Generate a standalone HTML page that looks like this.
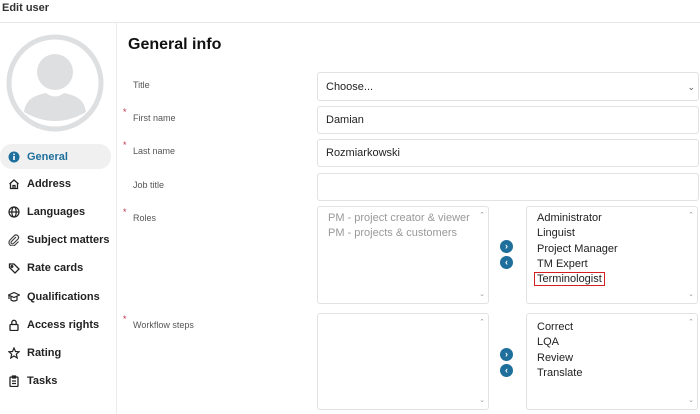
<!DOCTYPE html>
<html><head><style>
*{box-sizing:border-box;margin:0;padding:0}
body{width:700px;height:414px;overflow:hidden;background:#fff;font-family:"Liberation Sans",sans-serif;color:#222;position:relative}
.a{position:absolute}
.top{left:0;top:0;width:700px;height:23px;border-bottom:1px solid #e8e8e8;font-size:11px;font-weight:bold;padding:2px 0 0 2px;color:#333}
.side{left:116px;top:23px;width:1px;height:391px;background:#ececec}
.nav{left:8px;font-size:11px;font-weight:bold;color:#222}
.nav svg{position:absolute;left:0;top:0}
.nav span{position:absolute;left:19px;top:0;white-space:nowrap}
.lbl{left:133px;font-size:9px;color:#555}
.req{left:123px;font-size:9px;color:#c0304a}
.in{left:317px;width:382px;border:1px solid #e2e2e2;border-radius:3px;font-size:11px;padding-left:8px;color:#222}
.box{border:1px solid #e2e2e2;border-radius:3px;font-size:11px;line-height:15.3px;padding:4px 10px}
.sb{position:absolute;right:3px;font-size:7px;color:#999}
.btn{width:13px;height:13px;border-radius:50%;background:#1e6f9c;color:#fff;font-size:9px;font-weight:bold;text-align:center;line-height:12px}
</style></head><body>
<div class="a top">Edit user</div>
<div class="a side"></div>
<svg class="a" style="left:6px;top:34px" width="98" height="98" viewBox="0 0 98 98">
<circle cx="49" cy="49" r="46" fill="#fff" stroke="#dedfe1" stroke-width="5"/>
<circle cx="49" cy="38" r="18" fill="#dedfe1"/>
<path d="M18 78 C20 66 26 62 40 59 Q49 66 58 59 C72 62 78 66 80 78 Q49 96 18 78Z" fill="#dedfe1"/>
</svg>
<div class="a" style="left:0;top:144px;width:111px;height:25px;background:#f0f0f0;border-radius:12px"></div>
<div class="a nav" style="top:151px;color:#1e6f9c"><svg width="12" height="12"><circle cx="6" cy="6" r="5.5" fill="#1e6f9c"/><rect x="5.2" y="5" width="1.6" height="4" fill="#fff"/><rect x="5.2" y="2.6" width="1.6" height="1.5" fill="#fff"/></svg><span>General</span></div>
<div class="a nav" style="top:178px"><svg width="12" height="12" fill="none" stroke="#222" stroke-width="1.3"><path d="M1.5 6 L6 2 L10.5 6 M2.5 5.5 V10.5 H9.5 V5.5 M5 10.5 V7.5 H7 V10.5"/></svg><span>Address</span></div>
<div class="a nav" style="top:206px"><svg width="12" height="12" fill="none" stroke="#222" stroke-width="1.2"><circle cx="6" cy="6" r="5"/><ellipse cx="6" cy="6" rx="2.2" ry="5"/><path d="M1 6H11"/></svg><span>Languages</span></div>
<div class="a nav" style="top:234px"><svg width="12" height="12" fill="none" stroke="#444" stroke-width="1.2"><path d="M8 3 L3.5 7.5 A1.3 1.3 0 0 0 5.5 9.5 L10 5 A2.5 2.5 0 0 0 6.5 1.5 L2 6 A3.5 3.5 0 0 0 7 11 L10.5 7.5"/></svg><span>Subject matters</span></div>
<div class="a nav" style="top:262px"><svg width="12" height="12" fill="none" stroke="#222" stroke-width="1.3"><path d="M1.5 2 H6 L11 7 L7 11 L1.5 5.5Z"/><circle cx="4" cy="4.5" r=".8"/></svg><span>Rate cards</span></div>
<div class="a nav" style="top:291px"><svg width="12" height="12" fill="none" stroke="#222" stroke-width="1.2"><path d="M0.5 4 L6 1.5 L11.5 4 L6 6.5Z M3 5.5 V9 Q6 11 9 9 V5.5 M1 4 V8"/></svg><span>Qualifications</span></div>
<div class="a nav" style="top:319px"><svg width="12" height="12" fill="none" stroke="#222" stroke-width="1.3"><rect x="2" y="5.5" width="8" height="6" rx="1"/><path d="M3.8 5.5 V3.5 A2.2 2.2 0 0 1 8.2 3.5 V5.5"/></svg><span>Access rights</span></div>
<div class="a nav" style="top:347px"><svg width="12" height="12" fill="none" stroke="#222" stroke-width="1.2"><path d="M6 1 L7.5 4.5 L11 4.8 L8.3 7.2 L9.2 11 L6 9 L2.8 11 L3.7 7.2 L1 4.8 L4.5 4.5Z"/></svg><span>Rating</span></div>
<div class="a nav" style="top:375px"><svg width="12" height="12" fill="none" stroke="#222" stroke-width="1.3"><rect x="2" y="2" width="8" height="9.5" rx="1"/><path d="M4.5 1 H7.5 V3 H4.5Z M4 6 H8 M4 8.5 H8"/></svg><span>Tasks</span></div>

<div class="a" style="left:128px;top:36px;font-size:16px;font-weight:bold;color:#111">General info</div>
<div class="a lbl" style="top:80px">Title</div>
<div class="a req" style="top:107px">*</div><div class="a lbl" style="top:113px">First name</div>
<div class="a req" style="top:140px">*</div><div class="a lbl" style="top:146px">Last name</div>
<div class="a lbl" style="top:180px">Job title</div>
<div class="a req" style="top:207px">*</div><div class="a lbl" style="top:213px">Roles</div>
<div class="a req" style="top:314px">*</div><div class="a lbl" style="top:320px">Workflow steps</div>

<div class="a in" style="top:72px;height:29px;line-height:28px">Choose...<span style="position:absolute;right:3px;font-size:9px;color:#555">&#8964;</span></div>
<div class="a in" style="top:106px;height:28px;line-height:27px">Damian</div>
<div class="a in" style="top:139px;height:28px;line-height:27px">Rozmiarkowski</div>
<div class="a in" style="top:173px;height:28px"></div>

<div class="a box" style="left:317px;top:206px;width:172px;height:98px;color:#999">PM - project creator &amp; viewer<br>PM - projects &amp; customers<span class="sb" style="top:1px">&#8963;</span><span class="sb" style="bottom:1px">&#8964;</span></div>
<div class="a box" style="left:526px;top:206px;width:172px;height:98px">Administrator<br>Linguist<br>Project Manager<br>TM Expert<br><span style="border:1.5px solid #d42020;margin-left:-3px;padding:0 2px">Terminologist</span><span class="sb" style="top:1px">&#8963;</span><span class="sb" style="bottom:1px">&#8964;</span></div>
<div class="a btn" style="left:500px;top:240px">&#8250;</div>
<div class="a btn" style="left:500px;top:256px">&#8249;</div>

<div class="a box" style="left:317px;top:313px;width:172px;height:97px"><span class="sb" style="top:1px">&#8963;</span><span class="sb" style="bottom:1px">&#8964;</span></div>
<div class="a box" style="left:526px;top:313px;width:172px;height:97px;padding-top:6px">Correct<br>LQA<br>Review<br>Translate<span class="sb" style="top:1px">&#8963;</span><span class="sb" style="bottom:1px">&#8964;</span></div>
<div class="a btn" style="left:500px;top:348px">&#8250;</div>
<div class="a btn" style="left:500px;top:364px">&#8249;</div>
</body></html>
